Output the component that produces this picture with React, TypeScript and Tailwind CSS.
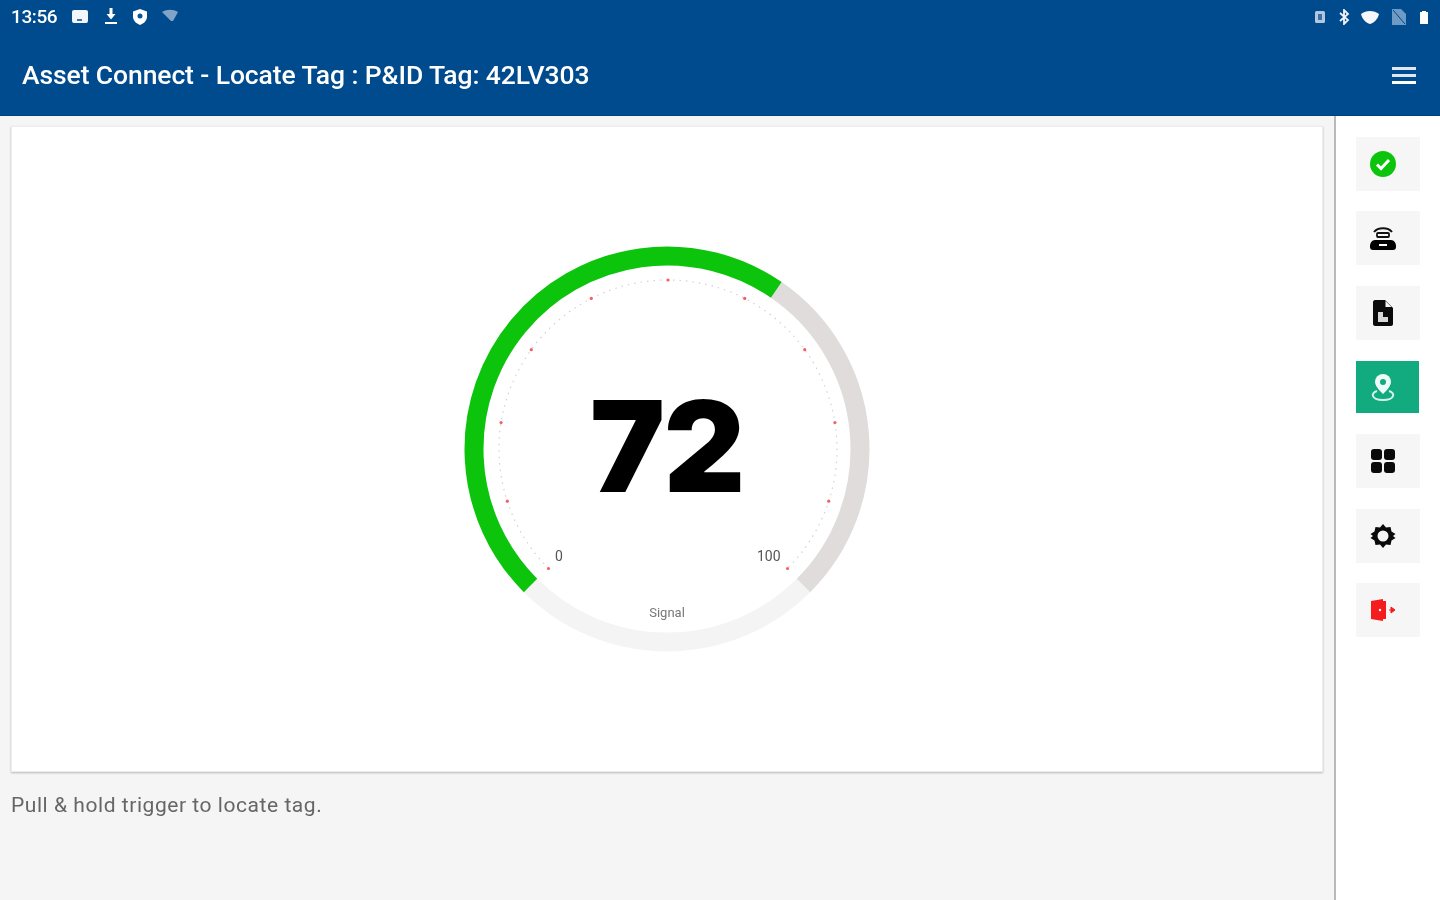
import React from "react";

const CX = 210;
const CY = 210;

function pt(r: number, deg: number, dx = 0) {
  const a = (deg * Math.PI) / 180;
  return [CX + dx + r * Math.sin(a), CY - r * Math.cos(a)];
}
function arc(r: number, from: number, to: number, dx = 0) {
  const [x1, y1] = pt(r, from, dx);
  const [x2, y2] = pt(r, to, dx);
  const large = to - from > 180 ? 1 : 0;
  return `M${x1} ${y1}A${r} ${r} 0 ${large} 1 ${x2} ${y2}`;
}

function Gauge() {
  const ticks = [-135, -108, -81, -54, -27, 0, 27, 54, 81, 108, 135];
  return (
    <div className="relative w-[420px] h-[420px] blur-[0.6px]">
      <svg width="420" height="420" viewBox="0 0 420 420" className="absolute inset-0">
        <path d={arc(193, 135, 225)} fill="none" stroke="#f4f4f4" strokeWidth="19" />
        <path d={arc(193, 34.5, 135)} fill="none" stroke="#dfdcdb" strokeWidth="19" />
        <path d={arc(193, -135, 34.5)} fill="none" stroke="#0cc40c" strokeWidth="19" />
        <path d={arc(169, -135, 135, 1)} fill="none" stroke="#d2d2d2" strokeWidth="1.2" strokeDasharray="1.5 5" />
        {ticks.map((t) => {
          const [x, y] = pt(169, t, 1);
          return <circle key={t} cx={x} cy={y} r="1.6" fill="#f2606a" />;
        })}
      </svg>
      <div className="absolute inset-x-0 top-[132px] text-center text-[126px] leading-[150px] font-black text-black font-['Inter',sans-serif] tracking-[-0.01em]">
        72
      </div>
      <div className="absolute left-[98px] top-[309px] text-[14px] leading-[16px] text-[#555] font-['Roboto',sans-serif]">0</div>
      <div className="absolute left-[300px] top-[309px] text-[14px] leading-[16px] text-[#555] font-['Roboto',sans-serif]">100</div>
      <div className="absolute inset-x-0 top-[366px] text-center text-[13px] leading-[16px] text-[#777] font-['Roboto',sans-serif]">Signal</div>
    </div>
  );
}

function Btn({ active, children }: { active?: boolean; children: React.ReactNode }) {
  return (
    <div className={active ? "w-[63px] h-[52px] my-[1px] flex items-center justify-center pr-[9px] bg-[#12ab7f]" : "w-16 h-[54px] flex items-center justify-center pr-[10px] bg-[#f6f6f6]"}>
      <div className="blur-[0.7px] flex">{children}</div>
    </div>
  );
}

export default function App() {
  return (
    <div className="w-[1440px] h-[900px] overflow-hidden flex flex-col bg-white font-['Roboto',sans-serif]">
      <header className="h-[116px] bg-[#004b8d] border-b border-[#003f80] shrink-0 flex flex-col text-white">
        <div className="h-[34px] flex items-center px-[11px] justify-between">
          <div className="flex items-center gap-[14px] blur-[0.6px]">
            <span className="text-[19px] font-medium tracking-[-0.4px] leading-[20px]">13:56</span>
            <svg width="18" height="16" viewBox="0 0 18 16" className="-mt-[1px]"><rect x="1" y="1" width="16" height="13" rx="2" fill="#f2f5f9" /><rect x="6" y="10" width="5" height="2" fill="#3e73a8" /></svg>
            <svg width="16" height="18" viewBox="0 0 16 18" className="-mt-[2px]"><path d="M6.5 1h3v6h3L8 12.5 3.500 7h3z" fill="#fff" /><rect x="2" y="15" width="12" height="2" fill="#fff" /></svg>
            <svg width="16" height="18" viewBox="0 0 16 18" className="-ml-[1px]"><path d="M8 1l7 2.500v5c0 4-3 7-7 8.500-4-1.500-7-4.500-7-8.500v-5z" fill="#fff" /><circle cx="8" cy="8" r="2.500" fill="#0a5596" /></svg>
            <svg width="18" height="14" viewBox="0 0 18 14" className="-mt-[2px] -ml-[1px]"><path d="M1 3c5-3 11-3 16 0l-5 9h-2z" fill="#7fa4c8" /></svg>
          </div>
          <div className="flex items-center gap-[11px] blur-[0.6px]">
            <svg width="12" height="14" viewBox="0 0 12 14" className="mr-[2px]"><rect x="1" y="1" width="10" height="12" rx="1.500" fill="#b4c8dd" /><rect x="4" y="4" width="4" height="6" fill="#3a70a6" /></svg>
            <svg width="11" height="16" viewBox="0 0 11 16" className="mr-[-1px]"><path d="M1 4l8 7-4 4V1l4 4-8 7" fill="none" stroke="#eef3f8" strokeWidth="1.800" /></svg>
            <svg width="20" height="15" viewBox="0 0 20 15"><path d="M1 4c5-4 13-4 18 0-1 5-5 9-9 10C6 13 2 9 1 4z" fill="#f5f7fa" /></svg>
            <svg width="16" height="18" viewBox="0 0 16 18"><path d="M1 1h9l5 5v11H1z" fill="#6f9ac3" /><path d="M2 2l12 14" stroke="#004b8d" strokeWidth="1" /></svg>
            <svg width="10" height="15" viewBox="0 0 10 15" className="ml-[1px]"><path d="M3 1h4v1h2v12H1V2h2z" fill="#fff" /></svg>
          </div>
        </div>
        <div className="flex-1 flex items-center justify-between pl-[22px] pr-[24px] pt-[1px]">
          <h1 className="text-[26.5px] leading-[32px] font-medium tracking-[-0.1px] blur-[0.6px]">Asset Connect - Locate Tag : P&amp;ID Tag: 42LV303</h1>
          <div className="w-6 flex flex-col gap-[4px] blur-[0.5px]">
            <div className="h-[3px] bg-[#dfe8f1]" />
            <div className="h-[3px] bg-[#dfe8f1]" />
            <div className="h-[3px] bg-white" />
          </div>
        </div>
      </header>
      <div className="flex-1 flex min-h-0">
        <main className="w-[1334px] bg-[#f5f5f5] pt-[10px] pl-[11px] pr-[11px] flex flex-col">
          <div className="h-[646px] bg-white shadow-[0_1px_2px_rgba(0,0,0,0.25)] border border-[#ececec] flex items-center justify-center">
            <Gauge />
          </div>
          <p className="mt-[20px] text-[21px] leading-[26px] tracking-[0.55px] text-[#666] blur-[0.6px]">Pull &amp; hold trigger to locate tag.</p>
        </main>
        <div className="w-[2px] bg-[#b9b9b9]" />
        <aside className="flex-1 bg-white pt-[21px] pl-[20px] flex flex-col gap-[20.33px]">
          <Btn>
            <svg width="28" height="28" viewBox="0 0 28 28"><circle cx="14" cy="14" r="13" fill="#0cc40c" /><path d="M8 14.500l4 4 8-8.500" fill="none" stroke="#fff" strokeWidth="3" /></svg>
          </Btn>
          <Btn>
            <svg width="28" height="26" viewBox="0 0 28 26"><path d="M5 7c4-5 14-5 18 0" fill="none" stroke="#111" strokeWidth="2" /><rect x="8" y="8" width="12" height="4" rx="1" fill="none" stroke="#111" strokeWidth="1.800" /><path d="M1 21c0-3 2-6 5-6h16c3 0 5 3 5 6v1c0 2-1 3-3 3H4c-2 0-3-1-3-3z" fill="#000" /><path d="M10 19h8v2h-8z" fill="#fff" /></svg>
          </Btn>
          <Btn>
            <svg width="22" height="28" viewBox="0 0 22 28"><path d="M3 1h10l8 8v16c0 1-1 2-2 2H3c-1 0-2-1-2-2V3c0-1 1-2 2-2z" fill="#0b0b0b" /><path d="M13.500 2l6 6h-6z" fill="#f6f6f6" /><path d="M6 13h5v5h5v5H6z" fill="#d8d8d8" /></svg>
          </Btn>
          <Btn active>
            <svg width="24" height="28" viewBox="0 0 24 28"><path d="M12 1a8 8 0 0 1 8 8c0 5-8 12-8 12S4 14 4 9a8 8 0 0 1 8-8z" fill="#eefaf6" /><circle cx="12" cy="9" r="3" fill="#12ab7f" /><path d="M6 18c-3 1-5 3-4 5 1 3 6 4 10 4s9-1 10-4c1-2-1-4-4-5" fill="none" stroke="#d7f2ea" strokeWidth="2" /></svg>
          </Btn>
          <Btn>
            <svg width="26" height="26" viewBox="0 0 26 26"><rect x="1" y="1" width="11" height="11" rx="3" fill="#0a0a0a" /><rect x="14" y="1" width="11" height="11" rx="3" fill="#0a0a0a" /><rect x="1" y="14" width="11" height="11" rx="3" fill="#0a0a0a" /><rect x="14" y="14" width="11" height="11" rx="3" fill="#0a0a0a" /></svg>
          </Btn>
          <Btn>
            <svg width="26" height="26" viewBox="0 0 26 26"><path d="M13 1l3 3.500 4.500-.5 1 4.500 4 2.500-2.500 2 2.500 2-4 2.500-1 4.500-4.500-.5L13 25l-3-3.500-4.500.5-1-4.500-4-2.500 2.500-2-2.500-2 4-2.500 1-4.500 4.500.5z" fill="#0a0a0a" /><circle cx="13" cy="13" r="5.500" fill="#f6f6f6" /></svg>
          </Btn>
          <Btn>
            <svg width="26" height="22" viewBox="0 0 26 22"><path d="M1 2l12-2v22L1 20z" fill="#f41c1c" /><rect x="13" y="2" width="3" height="18" fill="#f41c1c" /><path d="M19 11h2V8l4 3-4 3v-3" fill="#f41c1c" stroke="#f41c1c" /><circle cx="10" cy="11" r="1.200" fill="#fff" /></svg>
          </Btn>
        </aside>
      </div>
    </div>
  );
}
